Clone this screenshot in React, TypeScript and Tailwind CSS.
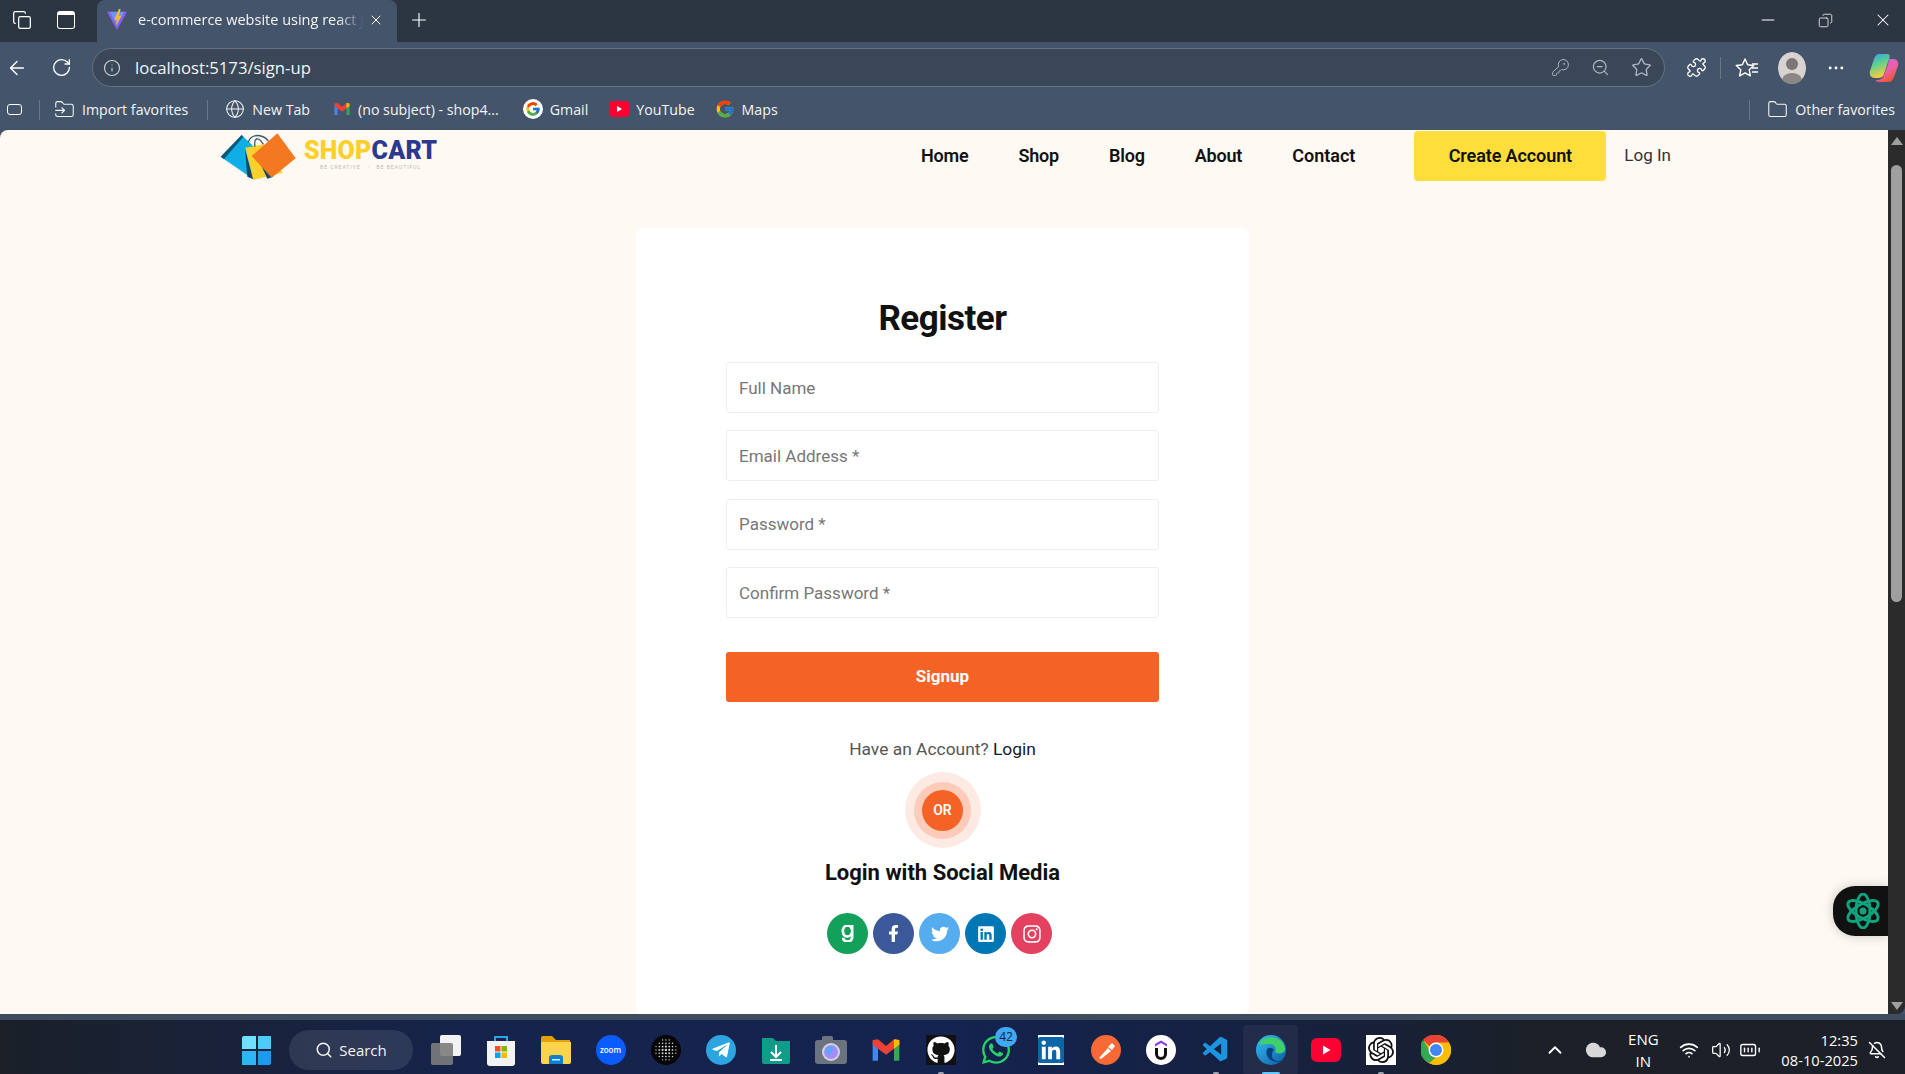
import React from "react";
import { ArrowLeft, RotateCw, Info, KeyRound, ZoomOut, Star, Puzzle, MoreHorizontal, Globe, Folder, FolderInput, Minus, Copy, X, Plus, ChevronUp, Wifi, Volume2, BatteryFull, Search, BellOff, Cloud } from "lucide-react";
import { FaFacebookF, FaTwitter, FaInstagram, FaLinkedin, FaGoodreadsG, FaGithub, FaTelegramPlane, FaWhatsapp } from "react-icons/fa";
import { FcGoogle } from "react-icons/fc";
import { SiOpenai, SiLinkedin } from "react-icons/si";
import { VscVscode } from "react-icons/vsc";

const chromeFont = { fontFamily: '"Open Sans","Noto Sans",sans-serif' };

function Gmail({ size = 20 }: { size?: number }) {
  return (
    <svg width={size} height={size} viewBox="0 0 24 24">
      <path d="M2 6v14h4V11z" fill="#4285f4" />
      <path d="M22 6v14h-4V11z" fill="#34a853" />
      <path d="M2 4.5 6 4l6 5 6-5 4 .5V8l-4 3-6 4.5L6 11 2 8z" fill="#ea4335" />
      <path d="M18 4l4 .5V8l-4 3z" fill="#fbbc04" />
    </svg>
  );
}

function Youtube({ w = 20, h = 16 }: { w?: number; h?: number }) {
  return (
    <svg width={w} height={h} viewBox="0 0 20 16">
      <rect width="20" height="16" rx="4" fill="#ff0033" />
      <path d="M8 5l5 3-5 3z" fill="#fff" />
    </svg>
  );
}

function Vite() {
  return (
    <svg width="22" height="22" viewBox="0 0 24 24">
      <path d="M1 3l11 20L23 3z" fill="#8b5cf6" />
      <path d="M4 3h16l-8 15z" fill="#60a5fa" opacity="0.75" />
      <path d="M14 0l-5 12 3-.5-1.5 7L17 7l-3 .5 2-7.5z" fill="#fbbf24" />
    </svg>
  );
}

function Copilot() {
  return (
    <svg width="30" height="32" viewBox="0 0 30 32">
      <defs>
        <linearGradient id="cpA" x1="0" y1="0" x2="0.3" y2="1">
          <stop offset="0" stopColor="#2f9ef5" />
          <stop offset="0.5" stopColor="#5fd38a" />
          <stop offset="1" stopColor="#f6c945" />
        </linearGradient>
        <linearGradient id="cpB" x1="0" y1="0" x2="0.6" y2="1">
          <stop offset="0" stopColor="#b56be0" />
          <stop offset="0.6" stopColor="#ef5fa7" />
          <stop offset="1" stopColor="#f0562e" />
        </linearGradient>
      </defs>
      <path d="M10 2h8c3 0 3 2 2 5l-5 15c-1 3-3 4-6 4H6C2 26 0 23 1 19L5 7c1-3 2.500-5 5-5z" fill="url(#cpA)" />
      <path d="M20 7h5c3 0 5 3 4 7l-4 11c-1 3-3 5-6 5h-9c-2 0-3-1-3-2 5 0 7-2 8-5l4-11c.6-2 .5-4 1-5z" fill="url(#cpB)" />
    </svg>
  );
}

function Profile() {
  return (
    <svg width="28" height="32" viewBox="0 0 28 32" className="rounded-full overflow-hidden">
      <ellipse cx="14" cy="16" rx="14" ry="16" fill="#d6d3d1" />
      <circle cx="14" cy="12" r="6" fill="#7a7672" />
      <ellipse cx="14" cy="28" rx="10" ry="7" fill="#8a8682" />
    </svg>
  );
}

function FavList() {
  return (
    <svg width="24" height="22" viewBox="0 0 24 22" fill="none" stroke="#fff" strokeWidth="1.400" strokeLinejoin="round">
      <path d="M10 2l2.600 5.800 6.200.7-4.600 4.200 1.200 6.200L10 15.800 4.600 19l1.200-6.200L1.200 8.500l6.200-.7z" />
      <path d="M17 7h6M17 11h6M17 15h6" />
    </svg>
  );
}

function Bags() {
  return (
    <svg width="80" height="50" viewBox="60 15 240 150">
      <path d="M62 92 125 27 170 70 160 160z" fill="#10aee6" />
      <path d="M62 92 125 27 130 32 72 100z" fill="#0d5a78" />
      <path d="M135 70 160 160 142 152z" fill="#0d4a66" />
      <path d="M136 65 190 55 248 140 160 162z" fill="#fbcf2c" />
      <path d="M180 110 220 152 202 158z" fill="#0d4a66" />
      <path d="M155 90 232 22 287 97 215 155z" fill="#f47821" />
      <path d="M145 48C155 20 190 25 205 45M165 62C160 35 175 30 190 55" fill="none" stroke="#375a75" strokeWidth="4" />
    </svg>
  );
}

function Atom({ size = 36 }: { size?: number }) {
  return (
    <svg width={size} height={size} viewBox="0 0 36 36" fill="none" stroke="#10a37f" strokeWidth="3">
      <ellipse cx="18" cy="18" rx="17" ry="7" transform="rotate(30 18 18)" />
      <ellipse cx="18" cy="18" rx="17" ry="7" transform="rotate(90 18 18)" />
      <ellipse cx="18" cy="18" rx="17" ry="7" transform="rotate(150 18 18)" />
      <circle cx="18" cy="18" r="3.500" fill="#10a37f" stroke="none" />
    </svg>
  );
}

function Windows11() {
  return (
    <div className="grid grid-cols-2 gap-[2px] w-[29px] h-[29px]">
      <div className="bg-[#6fe0ff] rounded-tl-[2px]" />
      <div className="bg-[#4dcbfb]" />
      <div className="bg-[#2db5f7]" />
      <div className="bg-[#1a9bf0] rounded-br-[2px]" />
    </div>
  );
}

function TaskViewIcon() {
  return (
    <div className="relative w-[30px] h-[30px]">
      <div className="absolute left-[9px] top-0 w-[21px] h-[21px] bg-[#f2f2f2] rounded-[2px]" />
      <div className="absolute left-0 top-[8px] w-[22px] h-[22px] bg-[#7c7c7c]/90 rounded-[2px]" />
    </div>
  );
}

function StoreIcon() {
  return (
    <svg width="30" height="32" viewBox="0 0 30 32">
      <path d="M9 7V3h12v4" fill="none" stroke="#2aa6e8" strokeWidth="2" />
      <path d="M1 7h28v22a3 3 0 0 1-3 3H4a3 3 0 0 1-3-3z" fill="#f3f3f3" />
      <rect x="9" y="12" width="5.500" height="5.500" fill="#f25022" />
      <rect x="15.500" y="12" width="5.500" height="5.500" fill="#7fba00" />
      <rect x="9" y="18.500" width="5.500" height="5.500" fill="#00a4ef" />
      <rect x="15.500" y="18.500" width="5.500" height="5.500" fill="#ffb900" />
    </svg>
  );
}

function ExplorerIcon() {
  return (
    <svg width="32" height="28" viewBox="0 0 32 28">
      <path d="M1 2a2 2 0 0 1 2-2h9l4 4h14v6H1z" fill="#e3a008" />
      <path d="M1 6h30v20a2 2 0 0 1-2 2H3a2 2 0 0 1-2-2z" fill="#fcd34d" />
      <path d="M9 22a3 3 0 0 1 3-3h8a3 3 0 0 1 3 3v6H9z" fill="#0f7fd0" />
      <rect x="12" y="23" width="8" height="1.500" fill="#cfeaff" />
    </svg>
  );
}

function DownloadFolder() {
  return (
    <svg width="30" height="28" viewBox="0 0 30 28">
      <path d="M1 2h11l3 3h14v21a2 2 0 0 1-2 2H3a2 2 0 0 1-2-2z" fill="#0f9d8a" />
      <path d="M15 9v11m-5-4 5 5 5-5M9 24h12" stroke="#fff" strokeWidth="2" fill="none" />
    </svg>
  );
}

function CameraIcon() {
  return (
    <svg width="32" height="28" viewBox="0 0 32 28">
      <rect y="4" width="32" height="24" rx="3" fill="#6b7280" />
      <rect x="7" y="0" width="11" height="6" rx="1.500" fill="#6b7280" />
      <circle cx="16" cy="16" r="9" fill="#d1d5db" />
      <circle cx="16" cy="16" r="7" fill="#a78bfa" />
      <path d="M10 16a6 6 0 0 1 9-5l-4 9z" fill="#60a5fa" />
    </svg>
  );
}

function PerplexityDots() {
  const dots = [];
  for (let y = 0; y < 7; y++) {
    for (let x = 0; x < 7; x++) {
      const d = Math.hypot(x - 3, y - 3);
      if (d <= 3.2) dots.push(<circle key={`${x}-${y}`} cx={5 + x * 3.3} cy={5 + y * 3.3} r={1.200 - d * 0.17} fill="#d4d4d4" />);
    }
  }
  return (
    <svg width="30" height="30" viewBox="0 0 30 30">
      <circle cx="15" cy="15" r="15" fill="#060606" />
      {dots}
    </svg>
  );
}

function PostmanIcon() {
  return (
    <svg width="30" height="30" viewBox="0 0 30 30">
      <circle cx="15" cy="15" r="15" fill="#f76935" />
      <path d="M8 23l9-10 3 3-10 8zM17 12l4-4 3 3-3 4z" fill="#fff" />
    </svg>
  );
}

function UdemyIcon() {
  return (
    <svg width="30" height="30" viewBox="0 0 30 30">
      <circle cx="15" cy="15" r="15" fill="#fff" />
      <path d="M9 9l6-3.500L21 9v2.500l-6-3.500-6 3.500z" fill="#8b3dff" />
      <path d="M10.500 13v6a4.500 4.500 0 0 0 9 0v-6" fill="none" stroke="#111" strokeWidth="3" />
    </svg>
  );
}

function EdgeIcon() {
  return (
    <svg width="30" height="30" viewBox="0 0 30 30">
      <defs>
        <linearGradient id="edgeA" x1="0" y1="0" x2="1" y2="1">
          <stop offset="0" stopColor="#35c1f1" />
          <stop offset="1" stopColor="#0c59a4" />
        </linearGradient>
      </defs>
      <circle cx="15" cy="15" r="15" fill="url(#edgeA)" />
      <path d="M3 9C7 0 26-1 29 13c1 5-6 7-10 4 2-4-1-8-6-8-4 0-8 1-10 0z" fill="#3fd06c" />
      <path d="M12 13c-4 5 0 14 10 14 2 0 3-.5 4-1.500-6 2-10-1-10-5 0-3 1-5 2-6-2-2-4-2-6-1.500z" fill="#0b3f80" />
    </svg>
  );
}

function ChromeIcon() {
  return (
    <svg width="30" height="30" viewBox="0 0 30 30">
      <circle cx="15" cy="15" r="15" fill="#fbbc04" />
      <path d="M15 0a15 15 0 0 1 13 7.500H15a7.500 7.500 0 0 0-6.500 3.750L2 4.800A15 15 0 0 1 15 0z" fill="#ea4335" />
      <path d="M2 4.800l6.500 10.700A7.500 7.500 0 0 0 15 22.500L8.500 28A15 15 0 0 1 2 4.800z" fill="#34a853" />
      <path d="M8.500 28 15 22.500c2.500 0 5-1.500 6.500-3.750L28 7.500A15 15 0 0 1 15 30c-2.400 0-4.500-.7-6.500-2z" fill="#fbbc04" />
      <circle cx="15" cy="15" r="7.500" fill="#fff" />
      <circle cx="15" cy="15" r="6" fill="#4285f4" />
    </svg>
  );
}

function Slot({ children, dot, active }: { children: React.ReactNode; dot?: boolean; active?: boolean }) {
  return (
    <div className={`relative w-[55px] h-[50px] flex items-center justify-center rounded-[4px] ${active ? "bg-white/5" : ""}`}>
      {children}
      {dot && <div className="absolute bottom-0 left-1/2 -translate-x-1/2 w-[6px] h-[3px] rounded-full bg-[#9ca3af]" />}
      {active && <div className="absolute bottom-0 left-1/2 -translate-x-1/2 w-[18px] h-[3px] rounded-full bg-[#60c8ff]" />}
    </div>
  );
}

function Bookmark({ icon, label, className }: { icon: React.ReactNode; label: string; className?: string }) {
  return (
    <div className={`flex items-center gap-[7px] text-[14.2px] text-[#f3f4f6] whitespace-nowrap ${className ?? ""}`}>
      {icon}
      <span>{label}</span>
    </div>
  );
}

const fields = ["Full Name", "Email Address *", "Password *", "Confirm Password *"];

const socials = [
  { Icon: FaGoodreadsG, bg: "bg-[#13a05a]", size: 17, bold: true },
  { Icon: FaFacebookF, bg: "bg-[#3b5998]", size: 17, bold: false },
  { Icon: FaTwitter, bg: "bg-[#55acee]", size: 18, bold: false },
  { Icon: FaLinkedin, bg: "bg-[#0077b5]", size: 18, bold: false },
  { Icon: FaInstagram, bg: "bg-[#e4405f]", size: 20, bold: false },
];

export default function App() {
  return (
    <div className="w-[1905px] h-[1074px] flex flex-col overflow-hidden bg-[#44546a]" style={chromeFont}>
      {/* tab strip */}
      <div className="h-[42px] shrink-0 bg-[#2c3643] flex items-center text-white">
        <div className="w-[97px] pl-[12px] mb-[2px] flex items-center gap-[25px]">
          <Copy size={20} strokeWidth={1.500} />
          <div className="w-[18px] h-[18px] border-[1.500px] border-white rounded-[3px] border-t-[4px]" />
        </div>
        <div className="w-[300px] h-[42px] bg-[#44546a] rounded-t-[8px] flex items-center pl-[9px] pr-[13px] pb-[2px]">
          <Vite />
          <span className="ml-[10px] w-[226px] overflow-hidden whitespace-nowrap text-[14.5px] text-[#f3f4f6] [mask-image:linear-gradient(90deg,#000_88%,transparent)]">e-commerce website using react js</span>
          <X size={16} className="ml-auto" strokeWidth={1.500} />
        </div>
        <Plus size={22} strokeWidth={1.250} className="ml-[11px] mb-[2px]" />
        <div className="ml-auto flex items-center gap-[40px] pr-[12px] mb-[2px]">
          <Minus size={20} strokeWidth={1.250} />
          <Copy size={15} strokeWidth={1.250} className="-scale-x-100" />
          <X size={20} strokeWidth={1.250} />
        </div>
      </div>
      {/* toolbar */}
      <div className="h-[45px] shrink-0 flex items-center text-white">
        <div className="w-[92px] pl-[6px] mt-[6px] flex items-center gap-[23px]">
          <ArrowLeft size={22} strokeWidth={1.500} />
          <RotateCw size={21} strokeWidth={1.500} />
        </div>
        <div className="w-[1573px] h-[39px] mt-[6px] rounded-full bg-[#394759] border border-[#66727f] flex items-center pl-[10px] pr-[12px]">
          <Info size={18} strokeWidth={1.500} className="text-[#d1d5db]" />
          <span className="ml-[14px] pt-[1px] text-[16.7px] text-[#f3f4f6]">localhost:5173/sign-up</span>
          <div className="ml-auto flex items-center gap-[21px] text-[#aeb6c0]">
            <KeyRound size={19} strokeWidth={1.250} />
            <ZoomOut size={19} strokeWidth={1.500} />
            <Star size={21} strokeWidth={1.500} />
          </div>
        </div>
        <div className="flex items-center mt-[6px] pl-[21px]">
          <Puzzle size={21} strokeWidth={1.500} />
          <div className="ml-[13px] w-px h-[22px] bg-[#6b7787]" />
          <div className="ml-[14px]"><FavList /></div>
          <div className="ml-[19px]"><Profile /></div>
          <MoreHorizontal size={20} className="ml-[20px]" strokeWidth={1.500} />
          <div className="ml-[23px]"><Copilot /></div>
        </div>
      </div>
      {/* bookmarks */}
      <div className="h-[43px] shrink-0 pt-[2px] flex items-center text-white">
        <div className="w-[15px] h-[11px] ml-[7px] border-[1.500px] border-white rounded-[3px]" />
        <div className="ml-[17px] w-px h-[20px] bg-[#6b7787]" />
        <Bookmark className="ml-[14px]" icon={<FolderInput size={21} strokeWidth={1.250} />} label="Import favorites" />
        <div className="ml-[19px] w-px h-[20px] bg-[#6b7787]" />
        <Bookmark className="ml-[17px]" icon={<Globe size={20} strokeWidth={1.250} />} label="New Tab" />
        <Bookmark className="ml-[23px]" icon={<Gmail size={18} />} label="(no subject) - shop4..." />
        <Bookmark className="ml-[24px]" icon={<span className="w-[20px] h-[20px] rounded-full bg-white flex items-center justify-center"><FcGoogle size={16} /></span>} label="Gmail" />
        <Bookmark className="ml-[21px]" icon={<Youtube />} label="YouTube" />
        <Bookmark className="ml-[20px]" icon={<FcGoogle size={20} />} label="Maps" />
        <div className="ml-auto w-px h-[20px] bg-[#6b7787]" />
        <Bookmark className="ml-[17px] pr-[10px]" icon={<Folder size={21} strokeWidth={1.250} />} label="Other favorites" />
      </div>
      {/* viewport */}
      <div className="flex-1 min-h-0 flex rounded-tl-[8px] overflow-hidden">
        <div className="relative flex-1 min-w-0 overflow-hidden bg-[#fff9f3]" style={{ fontFamily: 'Roboto,"Noto Sans",sans-serif' }}>
          <nav className="h-[52px] flex items-center pl-[220px] pr-[217px]">
            <div className="flex items-center -mt-px">
              <Bags />
              <div className="ml-[4px] -mt-[3px] flex flex-col items-center">
                <div className="text-[25px] leading-[26px] font-black tracking-[0.2px]">
                  <span className="text-[#fcd02b]">SHOP</span>
                  <span className="text-[#2b3a8f]">CART</span>
                </div>
                <div className="text-[5px] leading-[6px] tracking-[1px] text-[#b8b8b8]">BE CREATIVE &nbsp;&nbsp;-&nbsp;&nbsp; BE BEAUTIFUL</div>
              </div>
            </div>
            <ul className="ml-auto pb-[2px] flex items-center gap-[50px] text-[18px] tracking-[-0.2px] font-semibold text-[#111]">
              <li>Home</li>
              <li>Shop</li>
              <li>Blog</li>
              <li>About</li>
              <li className="tracking-[0px]">Contact</li>
            </ul>
            <button className="ml-[59px] w-[192px] h-[50px] pb-[2px] rounded-[4px] bg-[#ffdd3a] text-[18px] tracking-[-0.1px] font-semibold text-[#111]">Create Account</button>
            <span className="ml-[18px] text-[17px] text-[#333]">Log In</span>
          </nav>
          <div className="flex justify-center pt-[46px]">
            <div className="w-[613px] -ml-[3px] bg-white rounded-[6px] flex flex-col items-center pt-[71px] pb-[60px]">
              <h1 className="text-[35px] leading-[40px] font-bold text-[#111] tracking-[-0.5px]">Register</h1>
              <div className="mt-[23px] w-[433px] flex flex-col gap-[17.4px]">
                {fields.map((f) => (
                  <input
                    key={f}
                    placeholder={f}
                    readOnly
                    className="w-full h-[51px] px-[12px] bg-white border border-[#eceef2] rounded-[3px] text-[17px] placeholder:text-[#777]"
                  />
                ))}
              </div>
              <button className="mt-[34px] w-[433px] h-[50px] rounded-[3px] bg-[#f46325] text-white text-[17px] font-bold">Signup</button>
              <p className="mt-[35px] text-[17.4px] leading-[24px] text-[#555]">
                Have an Account? <span className="text-[#111a2e]">Login</span>
              </p>
              <div className="mt-[11px] w-[76px] h-[76px] rounded-full bg-[#fdeae3] flex items-center justify-center">
                <div className="w-[57px] h-[57px] rounded-full bg-[#fccbb9] flex items-center justify-center">
                  <div className="w-[41px] h-[41px] rounded-full bg-[#f46325] flex items-center justify-center text-white text-[14px] font-semibold">OR</div>
                </div>
              </div>
              <h2 className="mt-[11px] text-[22px] leading-[28px] font-bold text-[#111]">Login with Social Media</h2>
              <div className="mt-[26px] -ml-[6px] flex gap-[5px]">
                {socials.map(({ Icon, bg, size, bold }, i) => (
                  <div key={i} className={`w-[41px] h-[41px] rounded-full flex items-center justify-center text-white ${bg}`}>
                    {bold ? <Icon size={size} stroke="currentColor" strokeWidth={36} /> : <Icon size={size} />}
                  </div>
                ))}
              </div>
            </div>
          </div>
          <div className="absolute right-0 top-[756px] w-[55px] h-[50px] rounded-l-[22px] bg-[#111] shadow-[0_0_12px_rgba(0,0,0,0.2)] flex items-center pl-[12px]">
            <Atom size={36} />
          </div>
        </div>
        {/* scrollbar */}
        <div className="w-[17px] shrink-0 bg-[#2b2b2b] rounded-br-[8px] flex flex-col items-center pt-[7px] pb-[4px]">
          <div className="w-0 h-0 border-l-[6px] border-r-[6px] border-b-[8px] border-l-transparent border-r-transparent border-b-[#9f9f9f]" />
          <div className="mt-[20px] w-[11px] h-[437px] rounded-full bg-[#9f9f9f]" />
          <div className="mt-auto w-0 h-0 border-l-[6px] border-r-[6px] border-t-[8px] border-l-transparent border-r-transparent border-t-[#9f9f9f]" />
        </div>
      </div>
      {/* taskbar */}
      <div className="h-[60px] shrink-0 border-t-[6px] border-[#3e4c60] pt-[6px] bg-[linear-gradient(90deg,#1b2029_0%,#16244c_25%,#14234f_50%,#16213f_68%,#1b2029_80%)] flex items-center pl-[229px] text-white">
        <Slot><Windows11 /></Slot>
        <div className="ml-[5px] w-[124px] h-[40px] rounded-full bg-white/10 flex items-center justify-center gap-[6px] text-[15px] text-[#f3f4f6]">
          <Search size={18} strokeWidth={2} />
          <span>Search</span>
        </div>
        <div className="ml-[5px] flex items-center">
          <Slot><TaskViewIcon /></Slot>
          <Slot><StoreIcon /></Slot>
          <Slot><ExplorerIcon /></Slot>
          <Slot><div className="w-[30px] h-[30px] rounded-full bg-[#0b5cff] flex items-center justify-center text-[8px] text-white font-semibold">zoom</div></Slot>
          <Slot><PerplexityDots /></Slot>
          <Slot><div className="w-[30px] h-[30px] rounded-full bg-[#2ca5e0] flex items-center justify-center"><FaTelegramPlane size={20} color="#fff" /></div></Slot>
          <Slot><DownloadFolder /></Slot>
          <Slot><CameraIcon /></Slot>
          <Slot><Gmail size={32} /></Slot>
          <Slot dot><div className="w-[30px] h-[30px] bg-[#111] flex items-center justify-center"><FaGithub size={28} color="#fff" /></div></Slot>
          <Slot>
            <FaWhatsapp size={32} color="#25d366" />
            <div className="absolute right-[6px] top-[2px] min-w-[22px] h-[20px] px-[4px] rounded-full bg-[#3fa9f5] text-[#10223a] text-[12px] flex items-center justify-center">42</div>
          </Slot>
          <Slot><div className="w-[26px] h-[30px] bg-white flex items-center justify-center"><SiLinkedin size={30} color="#0a66a8" /></div></Slot>
          <Slot><PostmanIcon /></Slot>
          <Slot><UdemyIcon /></Slot>
          <Slot dot><VscVscode size={30} color="#1c95e0" /></Slot>
          <Slot active><EdgeIcon /></Slot>
          <Slot><Youtube w={30} h={26} /></Slot>
          <Slot dot><div className="w-[30px] h-[30px] bg-white flex items-center justify-center"><SiOpenai size={26} color="#111" /></div></Slot>
          <Slot><ChromeIcon /></Slot>
        </div>
        <div className="ml-auto flex items-center pr-[19px]">
          <ChevronUp size={22} strokeWidth={2} />
          <Cloud size={22} fill="#d8d8d8" color="#d8d8d8" className="ml-[19px]" />
          <div className="ml-[18px] w-[36px] flex flex-col items-center text-[15px] leading-[22px]">
            <span>ENG</span>
            <span>IN</span>
          </div>
          <Wifi size={20} className="ml-[18px]" />
          <Volume2 size={20} className="ml-[12px]" strokeWidth={1.500} />
          <BatteryFull size={22} className="ml-[8px]" strokeWidth={1.500} />
          <div className="ml-[20px] flex flex-col items-end text-[14.7px] leading-[20px]">
            <span>12:35</span>
            <span>08-10-2025</span>
          </div>
          <BellOff size={18} className="ml-[10px]" />
        </div>
      </div>
    </div>
  );
}
